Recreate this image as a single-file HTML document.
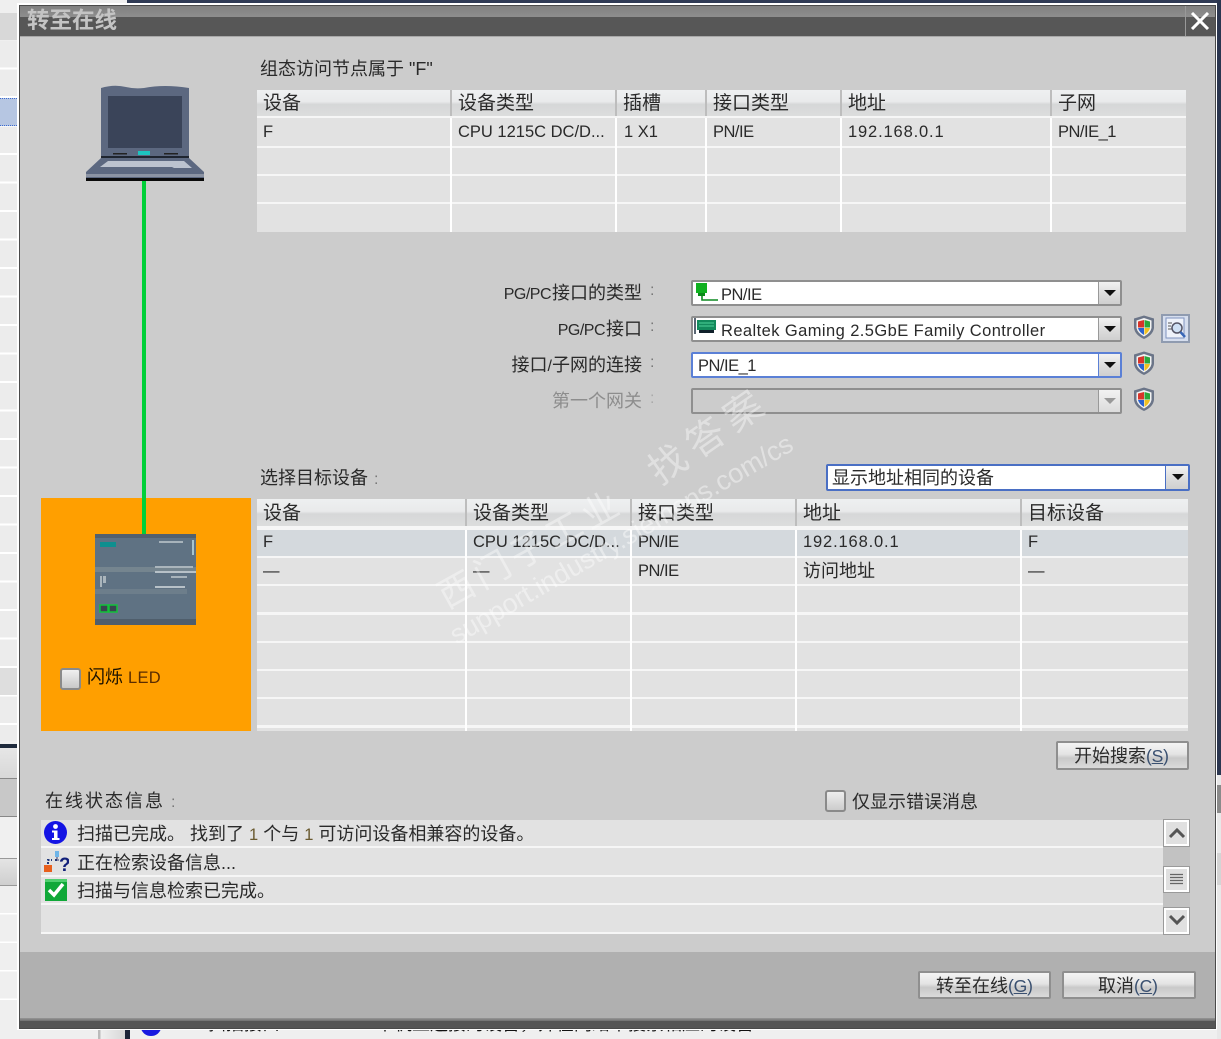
<!DOCTYPE html>
<html lang="zh"><head><meta charset="utf-8"><title>转至在线</title>
<style>
html,body{margin:0;padding:0;background:#efefef}
#p{position:relative;width:1221px;height:1039px;overflow:hidden;background:#efefef;font-family:"Liberation Sans","Noto Sans CJK SC",sans-serif;color:#222;filter:blur(.35px)}
#p div,#p span.t{position:absolute}
.t{white-space:nowrap;font-size:18px;line-height:24px;color:#2a2a2a}
.h{font-size:19px}
.l{font-size:16.5px}
.s{font-size:16px;letter-spacing:-.5px;margin-right:1px}
.ip{letter-spacing:.85px}
.n{letter-spacing:-.5px}
.c{color:#777;margin-left:6px;font-size:16px}
.p{color:#3a5070;font-size:17.5px;letter-spacing:-.2px}
.hd{background:linear-gradient(#eef0f1 0,#e9eaeb 45%,#d6d7d8 55%,#dcdddd 100%)}
.r{background:#e2e2e2}
.v{background:#fff;width:2px}
.vh{background:#bdbdbd;width:2px}
.cb{background:#fff;border:2px solid #8f8f8f;box-sizing:border-box;border-radius:2px}
.ar{background:linear-gradient(#f2f2f2,#dedede 50%,#cfcfcf);border-left:1px solid #999;box-sizing:border-box}
.tri{width:0;height:0;border-left:6px solid transparent;border-right:6px solid transparent;border-top:6px solid #111}
.btn{box-sizing:border-box;border:2px solid #8f8f8f;border-radius:2px;background:linear-gradient(#f4f4f4,#e4e4e4 45%,#c9c9c9 60%,#dadada);text-align:center}
.sb{box-sizing:border-box;border:2px solid #fff;outline:1px solid #9a9a9a;background:#e0e0e0}
</style></head><body><div id="p">

<!-- backdrop left -->
<div style="left:0;top:13px;width:17px;height:27px;background:#d8d8d8"></div>
<div style="left:0;top:41px;width:17px;height:700px;background:repeating-linear-gradient(#ececec 0,#ececec 26.5px,#fff 26.5px,#fff 28.5px)"></div>
<div style="left:0;top:98px;width:17px;height:28px;background:#b6c6e2;border-top:1px dotted #3d6bd0;border-bottom:1px dotted #3d6bd0;box-sizing:border-box"></div>
<div style="left:0;top:668px;width:17px;height:27px;background:#dedede"></div>
<div style="left:0;top:744px;width:17px;height:4px;background:#1e2a3c"></div>
<div style="left:0;top:748px;width:17px;height:30px;background:linear-gradient(#e6e6e6,#d8d8d8)"></div>
<div style="left:0;top:778px;width:17px;height:39px;background:#c8c8c8;border-top:1px solid #888;border-bottom:1px solid #888;box-sizing:border-box"></div>
<div style="left:0;top:817px;width:17px;height:41px;background:#f0f0f0"></div>
<div style="left:0;top:858px;width:17px;height:28px;background:linear-gradient(#e4e4e4,#cfcfcf);border-top:1px solid #999;border-bottom:1px solid #999;box-sizing:border-box"></div>
<div style="left:0;top:886px;width:17px;height:140px;background:repeating-linear-gradient(#efefef 0,#efefef 27px,#fff 27px,#fff 28.5px)"></div>
<!-- backdrop top/right -->
<div style="left:127px;top:0;width:1094px;height:3px;background:#2f3a55"></div>
<div style="left:1217px;top:0;width:4px;height:775px;background:#2b3650"></div>
<div style="left:1217px;top:775px;width:4px;height:264px;background:#e8e8e8"></div>
<div style="left:1217px;top:785px;width:4px;height:28px;background:#8a8a8a"></div>
<div style="left:1217px;top:853px;width:4px;height:32px;background:#d4d4d4"></div>

<!-- bottom strip -->
<div style="left:98px;top:1029px;width:27px;height:10px;background:linear-gradient(90deg,#bbb 0,#bbb 2px,#efefef 3px,#d8d8d8)"></div>
<div style="left:125px;top:1029px;width:5px;height:10px;background:#1c2438"></div>
<svg style="position:absolute;left:140px;top:1029px" width="24" height="10"><path d="M1 0h20q-3 7-10 7T1 0z" fill="#1818e0"/></svg>
<span class="t" style="left:208px;top:1012px;line-height:24px;color:#111">扫描接口</span>
<span class="t" style="left:376px;top:1012px;line-height:24px;color:#111">本机上连接的设备，并在网络中搜索相应的设备</span>

<!-- dialog -->
<div style="left:17px;top:3px;width:1200px;height:1027px;background:#fff"></div>
<div style="left:19px;top:5px;width:1197px;height:1024px;background:#cccccc;box-shadow:inset 0 0 0 1px #4a4a4a"></div>
<div style="left:20px;top:6px;width:1195px;height:11px;background:linear-gradient(#808080,#8e8e8e)"></div>
<div style="left:20px;top:17px;width:1195px;height:19px;background:#575757"></div>
<div style="left:20px;top:36px;width:1195px;height:1px;background:#a8a8a8"></div>
<span class="t" style="left:27px;top:7px;font-size:22.5px;line-height:28px;color:#c4c4c4;font-weight:bold">转至在线</span>
<div style="left:1185px;top:6px;width:1px;height:30px;background:#999"></div>
<svg style="position:absolute;left:1190px;top:12px" width="20" height="18"><path d="M2 1L18 17M18 1L2 17" stroke="#fff" stroke-width="3" fill="none"/></svg>

<!-- footer -->
<div style="left:20px;top:952px;width:1195px;height:66px;background:#b0b0b0"></div>
<div style="left:20px;top:1018px;width:1195px;height:3px;background:linear-gradient(#969696,#707070)"></div>
<div style="left:20px;top:1021px;width:1195px;height:7px;background:#555"></div>

<!-- laptop -->
<svg style="position:absolute;left:84px;top:84px" width="122" height="100">
<path d="M17 4Q30 0 42 3Q50 5 60 4Q80 0 105 4V72H17z" fill="#5c6880"/>
<rect x="24" y="12" width="74" height="52" fill="#3a4459"/>
<rect x="54" y="67" width="12" height="4" fill="#1cc4c0"/>
<rect x="29" y="69" width="14" height="1.500" fill="#222"/><rect x="80" y="69" width="14" height="1.500" fill="#222"/>
<rect x="17" y="72" width="88" height="2" fill="#1f2530"/>
<path d="M17 74H105L120 88V97H2V88z" fill="#5c6880"/>
<path d="M24 77H100L108 84H90L88 83H16z" fill="#bcc3cf"/>
<rect x="2" y="90" width="118" height="3" fill="#8b93a3"/>
<rect x="2" y="94" width="118" height="3" fill="#0a0a0a"/>
</svg>
<div style="left:142px;top:181px;width:4px;height:318px;background:#00d038"></div>

<!-- orange panel -->
<div style="left:41px;top:498px;width:210px;height:233px;background:#ff9f00"></div>
<div style="left:142px;top:498px;width:4px;height:37px;background:#00d038"></div>
<svg style="position:absolute;left:95px;top:534px" width="101" height="91">
<rect width="101" height="91" fill="#5f7283"/>
<rect width="101" height="4" fill="#52606e"/>
<rect y="85" width="101" height="6" fill="#4f5e6c"/>
<rect y="33" width="101" height="5" fill="#75858f"/>
<rect y="55" width="92" height="5" fill="#6d7e8b"/>
<rect x="5" y="8" width="16" height="5" fill="#0e8f8f"/>
<rect x="64" y="7" width="24" height="2" fill="#a7b3bb"/>
<rect x="97" y="6" width="2" height="15" fill="#a9c4cc"/>
<rect x="60" y="37" width="42" height="2" fill="#b7c1c8"/>
<rect x="76" y="42" width="16" height="2" fill="#a7b3bb"/>
<rect x="60" y="52" width="30" height="2" fill="#b7c1c8"/>
<rect x="60" y="32" width="38" height="2" fill="#aab5bc"/>
<rect x="5" y="42" width="2" height="11" fill="#aab5bc"/>
<rect x="8" y="42" width="3" height="7" fill="#aab5bc"/>
<rect x="5" y="71" width="8" height="7" fill="#39454f" stroke="#12c23a" stroke-width="1.500"/>
<rect x="14" y="71" width="8" height="7" fill="#39454f" stroke="#12c23a" stroke-width="1.500"/>
</svg>
<div style="left:60px;top:668px;width:21px;height:22px;box-sizing:border-box;border:2px solid #8a8a8a;border-radius:3px;background:linear-gradient(#f0f0f0,#c8c8c8)"></div>
<span class="t" style="left:87px;top:665px;color:#1c1200">闪烁 <span style="font-size:16.500px;color:#5a2c00;letter-spacing:.3px">LED</span></span>

<!-- table 1 -->
<span class="t" style="left:260px;top:57px">组态访问节点属于 <span style="font-size:18px">"F"</span></span>
<div style="left:257px;top:116px;width:929px;height:116px;background:#f6f6f6"></div>
<div class="hd" style="left:257px;top:90px;width:929px;height:26px"></div>
<div class="r" style="left:257px;top:118px;width:929px;height:28px"></div>
<div class="r" style="left:257px;top:148px;width:929px;height:26px"></div>
<div class="r" style="left:257px;top:176px;width:929px;height:26px"></div>
<div class="r" style="left:257px;top:204px;width:929px;height:28px"></div>
<div class="vh" style="left:450px;top:90px;height:26px"></div><div class="vh" style="left:615px;top:90px;height:26px"></div><div class="vh" style="left:705px;top:90px;height:26px"></div><div class="vh" style="left:840px;top:90px;height:26px"></div><div class="vh" style="left:1050px;top:90px;height:26px"></div>
<div class="v" style="left:450px;top:118px;height:114px"></div><div class="v" style="left:615px;top:118px;height:114px"></div><div class="v" style="left:705px;top:118px;height:114px"></div><div class="v" style="left:840px;top:118px;height:114px"></div><div class="v" style="left:1050px;top:118px;height:114px"></div>
<span class="t h" style="left:263px;top:92px">设备</span>
<span class="t h" style="left:458px;top:92px">设备类型</span>
<span class="t h" style="left:623px;top:92px">插槽</span>
<span class="t h" style="left:713px;top:92px">接口类型</span>
<span class="t h" style="left:848px;top:92px">地址</span>
<span class="t h" style="left:1058px;top:92px">子网</span>
<span class="t l" style="left:263px;top:120px">F</span>
<span class="t l" style="left:458px;top:120px">CPU 1215C DC/D...</span>
<span class="t l" style="left:624px;top:120px">1 X1</span>
<span class="t l n" style="left:713px;top:120px">PN/IE</span>
<span class="t l ip" style="left:848px;top:120px">192.168.0.1</span>
<span class="t l n" style="left:1058px;top:120px">PN/IE_1</span>

<!-- form -->
<span class="t" style="right:579px;top:281px"><span class="s">PG/PC</span>接口的类型</span>
<span class="t" style="right:579px;top:317px"><span class="s">PG/PC</span>接口</span>
<span class="t" style="right:579px;top:353px">接口<span style="font-size:16px">/</span>子网的连接</span>
<span class="t" style="right:579px;top:389px;color:#8d8d8d">第一个网关</span>
<span class="t" style="left:650px;top:279px;font-size:16px;color:#777">:</span>
<span class="t" style="left:650px;top:315px;font-size:16px;color:#777">:</span>
<span class="t" style="left:650px;top:351px;font-size:16px;color:#777">:</span>
<span class="t" style="left:650px;top:387px;font-size:16px;color:#aaa">:</span>

<div class="cb" style="left:691px;top:280px;width:431px;height:26px"></div>
<div class="ar" style="left:1098px;top:282px;width:22px;height:22px"><div class="tri" style="left:5px;top:8px"></div></div>
<svg style="position:absolute;left:695px;top:283px" width="24" height="20"><rect x="1" y="0" width="11" height="10" fill="#10b020"/><rect x="3" y="10" width="7" height="3" fill="#0a8a18"/><path d="M7 13V17H23" stroke="#0d8a20" stroke-width="1.600" fill="none"/></svg>
<span class="t l n" style="left:721px;top:283px">PN/IE</span>

<div class="cb" style="left:691px;top:316px;width:431px;height:26px"></div>
<div class="ar" style="left:1098px;top:318px;width:22px;height:22px"><div class="tri" style="left:5px;top:8px"></div></div>
<svg style="position:absolute;left:694px;top:318px" width="24" height="18"><path d="M1 0V16" stroke="#234" stroke-width="1.500"/><rect x="3" y="2" width="19" height="10" fill="#128a5c"/><path d="M5 5h15M5 8h15" stroke="#4fd19a"/><rect x="5" y="12" width="15" height="3" fill="#10202a"/></svg>
<span class="t l" style="left:721px;top:319px;letter-spacing:.42px">Realtek Gaming 2.5GbE Family Controller</span>

<div class="cb" style="left:691px;top:352px;width:431px;height:26px;border-color:#5b80d6"></div>
<div class="ar" style="left:1098px;top:354px;width:22px;height:22px;border-left-color:#5b80d6"><div class="tri" style="left:5px;top:8px"></div></div>
<span class="t l n" style="left:698px;top:354px">PN/IE_1</span>

<div class="cb" style="left:691px;top:388px;width:431px;height:26px;background:#cccccc"></div>
<div class="ar" style="left:1098px;top:390px;width:22px;height:22px;background:linear-gradient(#f2f2f2,#dcdcdc)"><div class="tri" style="left:5px;top:8px;border-top-color:#999"></div></div>

<svg width="0" height="0" style="position:absolute"><defs>
<g id="sh"><path d="M11 0.500L21 3.500V13Q20 20 11 24Q2 20 1 13V3.500z" fill="#6b7588"/><path d="M11 3L18.500 5.500V13Q17.500 18 11 21.500Q4.500 18 3.500 13V5.500z" fill="#f2f2f2"/>
<path d="M11 5V12.500H5V6.500z" fill="#d8342a"/><path d="M11.500 5L17 6.500V12.500H11.500z" fill="#2aa83a"/><path d="M5 13H11V20Q6 17 5 13z" fill="#2a62d0"/><path d="M11.500 13H17Q16 17 11.500 20z" fill="#f0c020"/></g></defs></svg>
<svg style="position:absolute;left:1133px;top:315px" width="22" height="25"><use href="#sh"/></svg>
<svg style="position:absolute;left:1133px;top:351px" width="22" height="25"><use href="#sh"/></svg>
<svg style="position:absolute;left:1133px;top:387px" width="22" height="25"><use href="#sh"/></svg>
<div style="left:1161px;top:314px;width:29px;height:29px;box-sizing:border-box;border:2px solid #8f9bb0;background:#d6deee"></div>
<svg style="position:absolute;left:1165px;top:317px" width="22" height="24"><rect x="1" y="1" width="18" height="20" fill="#eef2fa" stroke="#7f93bd"/><path d="M3 6h4M3 9h3M3 12h4" stroke="#555"/><circle cx="12" cy="11" r="5" fill="#cfe0f4" stroke="#556"  stroke-width="1.500"/><path d="M15.500 15L20 20" stroke="#3a68b8" stroke-width="2.500"/></svg>

<!-- table 2 -->
<span class="t" style="left:260px;top:466px">选择目标设备<span class="c">:</span></span>
<div class="cb" style="left:826px;top:464px;width:364px;height:27px;border-color:#4a6fc4"></div>
<div class="ar" style="left:1165px;top:466px;width:23px;height:23px;border-left-color:#4a6fc4"><div class="tri" style="left:6px;top:8px"></div></div>
<span class="t" style="left:832px;top:466px">显示地址相同的设备</span>

<div style="left:257px;top:526px;width:931px;height:205px;background:#f6f6f6"></div>
<div class="hd" style="left:257px;top:499px;width:931px;height:27px"></div>
<div class="r" style="left:257px;top:530px;width:931px;height:26px;background:#d4d9dd"></div>
<div class="r" style="left:257px;top:558px;width:931px;height:26px"></div>
<div class="r" style="left:257px;top:586px;width:931px;height:26px"></div>
<div class="r" style="left:257px;top:615px;width:931px;height:26px"></div>
<div class="r" style="left:257px;top:643px;width:931px;height:26px"></div>
<div class="r" style="left:257px;top:671px;width:931px;height:26px"></div>
<div class="r" style="left:257px;top:699px;width:931px;height:26px"></div>
<div class="r" style="left:257px;top:728px;width:931px;height:3px"></div>
<div class="vh" style="left:465px;top:499px;height:27px"></div><div class="vh" style="left:630px;top:499px;height:27px"></div><div class="vh" style="left:795px;top:499px;height:27px"></div><div class="vh" style="left:1020px;top:499px;height:27px"></div>
<div class="v" style="left:465px;top:530px;height:201px"></div><div class="v" style="left:630px;top:530px;height:201px"></div><div class="v" style="left:795px;top:530px;height:201px"></div><div class="v" style="left:1020px;top:530px;height:201px"></div>
<span class="t h" style="left:263px;top:502px">设备</span>
<span class="t h" style="left:473px;top:502px">设备类型</span>
<span class="t h" style="left:638px;top:502px">接口类型</span>
<span class="t h" style="left:803px;top:502px">地址</span>
<span class="t h" style="left:1028px;top:502px">目标设备</span>
<span class="t l" style="left:263px;top:530px">F</span>
<span class="t l" style="left:473px;top:530px">CPU 1215C DC/D...</span>
<span class="t l n" style="left:638px;top:530px">PN/IE</span>
<span class="t l ip" style="left:803px;top:530px">192.168.0.1</span>
<span class="t l" style="left:1028px;top:530px">F</span>
<span class="t l" style="left:263px;top:559px">—</span>
<span class="t l" style="left:473px;top:559px">—</span>
<span class="t l n" style="left:638px;top:559px">PN/IE</span>
<span class="t" style="left:803px;top:559px">访问地址</span>
<span class="t l" style="left:1028px;top:559px">—</span>

<!-- watermark -->
<span class="t" style="left:441px;top:577px;font-size:36px;line-height:44px;color:rgba(255,255,255,.4);letter-spacing:5px;transform:rotate(-29deg);transform-origin:0 50%">西门子工业</span>
<span class="t" style="left:653px;top:454px;font-size:38px;line-height:44px;color:rgba(255,255,255,.4);letter-spacing:8px;transform:rotate(-35deg);transform-origin:0 50%">找答案</span>
<span class="t" style="left:452px;top:622px;font-size:27px;line-height:30px;color:rgba(255,255,255,.42);transform:rotate(-30deg);transform-origin:0 50%">support.industry.siemens.com/cs</span>

<!-- search btn -->
<div class="btn" style="left:1056px;top:741px;width:133px;height:29px"></div>
<span class="t" style="left:1074px;top:744px">开始搜索<span class="p">(<u>S</u>)</span></span>

<!-- messages -->
<span class="t" style="left:45px;top:789px;letter-spacing:2px">在线状态信息<span class="c">:</span></span>
<div style="left:825px;top:790px;width:21px;height:22px;box-sizing:border-box;border:2px solid #8a8a8a;border-radius:3px;background:linear-gradient(#eee,#ccc)"></div>
<span class="t" style="left:852px;top:790px">仅显示错误消息</span>

<div style="left:41px;top:820px;width:1122px;height:114px;background:#f6f6f6"></div>
<div class="r" style="left:41px;top:820px;width:1122px;height:26px"></div>
<div class="r" style="left:41px;top:848px;width:1122px;height:27px"></div>
<div class="r" style="left:41px;top:877px;width:1122px;height:26px"></div>
<div class="r" style="left:41px;top:905px;width:1122px;height:27px"></div>

<svg style="position:absolute;left:43px;top:820px" width="25" height="25"><circle cx="12.500" cy="12.500" r="11.500" fill="#1414e4"/><circle cx="12.500" cy="6.500" r="2.400" fill="#fff"/><path d="M9 10.500H14.500V18H16.500V20H9V18H11V12.500H9z" fill="#fff"/></svg>
<span class="t" style="left:77px;top:822px">扫描已完成。 找到了 <span class="l" style="color:#6a5a30">1</span> 个与 <span class="l" style="color:#6a5a30">1</span> 可访问设备相兼容的设备。</span>
<svg style="position:absolute;left:43px;top:850px" width="26" height="24"><rect x="1" y="15" width="8" height="7" fill="#e8601c"/><path d="M5 14V10H9M12 10H16" stroke="#223a7a" stroke-width="2" stroke-dasharray="2 1.500" fill="none"/><rect x="12" y="1" width="4" height="6" fill="#6fb5e8"/><path d="M14 7V11" stroke="#336"/><text x="16" y="21" font-family="Liberation Sans" font-weight="bold" font-size="19" fill="#12207a">?</text></svg>
<span class="t" style="left:77px;top:851px">正在检索设备信息...</span>
<svg style="position:absolute;left:45px;top:879px" width="23" height="23"><rect width="22" height="22" fill="#10a838"/><rect width="22" height="3" fill="#4fcf6f"/><path d="M4 11L9 16L18 5" stroke="#fff" stroke-width="3.500" fill="none"/></svg>
<span class="t" style="left:77px;top:879px">扫描与信息检索已完成。</span>

<!-- scrollbar -->
<div style="left:1163px;top:820px;width:27px;height:114px;background:#c2c2c2"></div>
<div class="sb" style="left:1164px;top:820px;width:25px;height:26px"></div>
<svg style="position:absolute;left:1168px;top:826px" width="18" height="14"><path d="M2 11L9 4L16 11" stroke="#555" stroke-width="3" fill="none"/></svg>
<div class="sb" style="left:1164px;top:867px;width:25px;height:25px"></div>
<svg style="position:absolute;left:1170px;top:873px" width="14" height="14"><path d="M0 1.500H13M0 4.500H13M0 7.500H13M0 10.500H13" stroke="#666" stroke-width="1.200"/></svg>
<div class="sb" style="left:1164px;top:908px;width:25px;height:26px"></div>
<svg style="position:absolute;left:1168px;top:913px" width="18" height="14"><path d="M2 3L9 10L16 3" stroke="#555" stroke-width="3" fill="none"/></svg>

<!-- footer buttons -->
<div class="btn" style="left:918px;top:971px;width:133px;height:28px"></div>
<span class="t" style="left:936px;top:974px">转至在线<span class="p">(<u>G</u>)</span></span>
<div class="btn" style="left:1062px;top:971px;width:134px;height:28px"></div>
<span class="t" style="left:1098px;top:974px">取消<span class="p">(<u>C</u>)</span></span>

</div></body></html>
